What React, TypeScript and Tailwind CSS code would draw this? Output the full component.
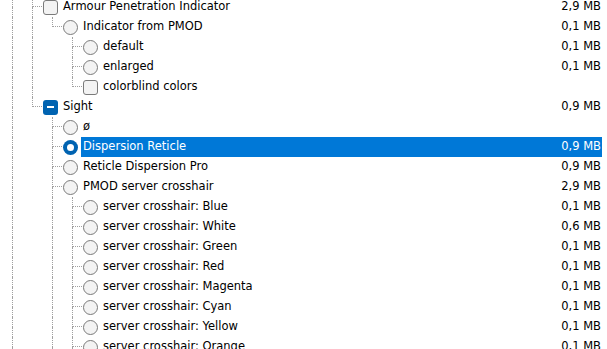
import React from "react";

type Guide = "line" | "none" | "tee" | "elbow";
type Kind = "check" | "radio" | "radio-on" | "partial";

type Row = {
  label: string;
  kind: Kind;
  guides: Guide[];
  size?: string;
  selected?: boolean;
};

const L: Guide = "line";
const N: Guide = "none";
const T: Guide = "tee";
const E: Guide = "elbow";

const rows: Row[] = [
  { label: "Armour Penetration Indicator", kind: "check", guides: [L, T], size: "2,9 MB" },
  { label: "Indicator from PMOD", kind: "radio", guides: [L, L, E], size: "0,1 MB" },
  { label: "default", kind: "radio", guides: [L, L, N, T], size: "0,1 MB" },
  { label: "enlarged", kind: "radio", guides: [L, L, N, T], size: "0,1 MB" },
  { label: "colorblind colors", kind: "check", guides: [L, L, N, E] },
  { label: "Sight", kind: "partial", guides: [L, E], size: "0,9 MB" },
  { label: "ø", kind: "radio", guides: [L, N, T] },
  { label: "Dispersion Reticle", kind: "radio-on", guides: [L, N, T], size: "0,9 MB", selected: true },
  { label: "Reticle Dispersion Pro", kind: "radio", guides: [L, N, T], size: "0,9 MB" },
  { label: "PMOD server crosshair", kind: "radio", guides: [L, N, T], size: "2,9 MB" },
  { label: "server crosshair: Blue", kind: "radio", guides: [L, N, L, T], size: "0,1 MB" },
  { label: "server crosshair: White", kind: "radio", guides: [L, N, L, T], size: "0,6 MB" },
  { label: "server crosshair: Green", kind: "radio", guides: [L, N, L, T], size: "0,1 MB" },
  { label: "server crosshair: Red", kind: "radio", guides: [L, N, L, T], size: "0,1 MB" },
  { label: "server crosshair: Magenta", kind: "radio", guides: [L, N, L, T], size: "0,1 MB" },
  { label: "server crosshair: Cyan", kind: "radio", guides: [L, N, L, T], size: "0,1 MB" },
  { label: "server crosshair: Yellow", kind: "radio", guides: [L, N, L, T], size: "0,1 MB" },
  { label: "server crosshair: Orange", kind: "radio", guides: [L, N, L, T], size: "0,1 MB" },
];

function GuideCell({ g }: { g: Guide }) {
  const top =
    g === "none" ? "" : g === "line" ? "border-l border-dotted border-[#a0a0a0]" : "border-l border-b border-dotted border-[#a0a0a0]";
  const bottom = g === "line" || g === "tee" ? "border-l border-dotted border-[#a0a0a0]" : "";
  return (
    <div className="grid h-[20px] w-[20px] shrink-0 grid-cols-[10px_10px] grid-rows-[10px_10px]">
      <div />
      <div className={top} />
      <div />
      <div className={bottom} />
    </div>
  );
}

function Icon({ kind }: { kind: Kind }) {
  if (kind === "check")
    return <div className="h-[15px] w-[15px] rounded-[3px] border border-[#7a7a7a] bg-[#f3f3f3]" />;
  if (kind === "partial")
    return (
      <div className="flex h-[15px] w-[15px] items-center justify-center rounded-[3px] bg-[#0063b1]">
        <div className="h-[2px] w-[7px] bg-white" />
      </div>
    );
  if (kind === "radio-on")
    return (
      <div className="flex h-[15px] w-[15px] items-center justify-center rounded-full bg-[#0063b1]">
        <div className="h-[7px] w-[7px] rounded-full bg-white" />
      </div>
    );
  return <div className="h-[15px] w-[15px] rounded-full border border-[#7a7a7a] bg-[#f3f3f3]" />;
}

export default function App() {
  return (
    <div
      className="h-[349px] w-[607px] overflow-hidden bg-white text-[11.5px] text-black"
      style={{ fontFamily: '"DejaVu Sans", Tahoma, sans-serif' }}
    >
      <div className="-mt-[3px] w-[602px] pl-[2px]">
        {rows.map((r, i) => (
          <div key={i} className="flex h-[20px] items-stretch">
            {r.guides.map((g, j) => (
              <GuideCell key={j} g={g} />
            ))}
            <div className="flex w-[19px] shrink-0 items-center pl-[1px]">
              <Icon kind={r.kind} />
            </div>
            <div
              className={`flex min-w-0 flex-1 items-center justify-between pl-[2px] pr-[1px] ${
                r.selected ? "bg-[#0078d7] text-white" : ""
              }`}
            >
              <span className="whitespace-nowrap">{r.label}</span>
              <span className="whitespace-nowrap">{r.size ?? ""}</span>
            </div>
          </div>
        ))}
      </div>
    </div>
  );
}
